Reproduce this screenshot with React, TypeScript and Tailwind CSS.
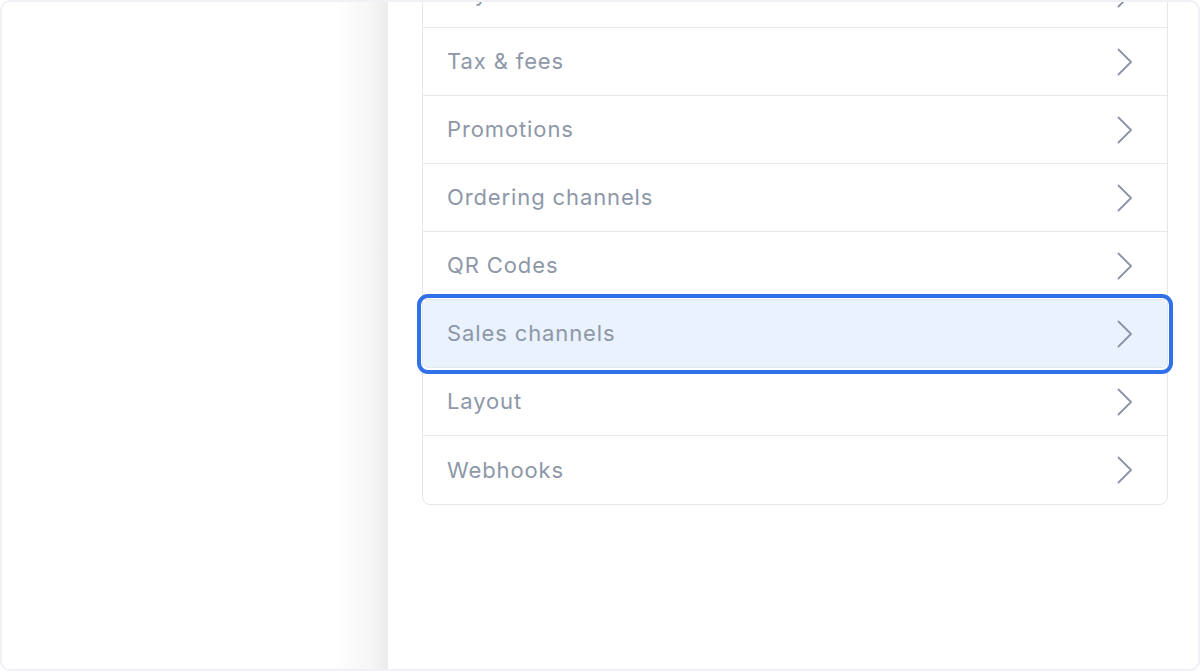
const items = [
  "Payments",
  "Tax & fees",
  "Promotions",
  "Ordering channels",
  "QR Codes",
  "Sales channels",
  "Layout",
  "Webhooks",
];

const active = "Sales channels";

function Chevron() {
  return (
    <svg width="16" height="28" viewBox="0 0 16 28" fill="none" className="shrink-0">
      <path d="M1.5 1.5 L14 14 L1.5 26.5" stroke="#8a94a6" strokeWidth="1.8" strokeLinecap="round" strokeLinejoin="round" />
    </svg>
  );
}

export default function App() {
  return (
    <div className="flex h-[671px] w-[1200px] overflow-hidden rounded-[10px] border-2 border-[#f0f0f5] bg-white font-['Inter',sans-serif]">
      {/* left pane, shaded by the sheet on top of it */}
      <div className="w-[386px] shrink-0 bg-linear-to-r from-white from-[86%] via-[#f7f7f7] via-[95%] to-[#ebebeb]" />

      <div className="flex-1 pl-[34px] pr-[30px]">
        <ul className="-mt-[43px] rounded-lg border border-[#e4e7ec]">
          {items.map((label, i) => {
            const isActive = label === active;
            return (
              <li
                key={label}
                className={
                  "flex h-[68px] items-center justify-between pl-6 pr-[34px] text-[22px] tracking-[0.04em] text-[#8d97a8] " +
                  (i < items.length - 1 ? "border-b border-[#e4e7ec] " : "") +
                  (isActive
                    ? "relative z-10 rounded-[5px] bg-[#eaf2fe] outline-4 outline-offset-2 outline-[#3070e8]"
                    : "")
                }
              >
                <span>{label}</span>
                <Chevron />
              </li>
            );
          })}
        </ul>
      </div>
    </div>
  );
}
